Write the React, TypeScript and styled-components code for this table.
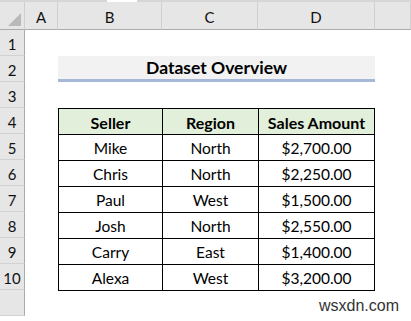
import React from 'react';
import styled, { createGlobalStyle } from 'styled-components';

const GlobalStyle = createGlobalStyle`
  html, body {
    margin: 0;
    padding: 0;
    background: #ffffff;
  }
  body {
    font-family: Lato, "Open Sans", sans-serif;
    width: 411px;
    height: 321px;
    overflow: hidden;
  }
`

const Page = styled.div`
  position: relative;
  width: 411px;
  height: 321px;
  overflow: hidden;
  background: #fff;
`

const TopStrip = styled.div`
  height: 2px;
  background: linear-gradient(to right, #d6d6d6 0 107px, #ffffff 107px 137px, #d6d6d6 137px);
`

const Sheet = styled.div`
  display: grid;
  grid-template-columns: 25px 33px 104px 96px 117px 1fr;
  grid-template-rows: 28px repeat(11, 26px);
`

const Corner = styled.div`
  position: relative;
  background: #e6e6e6;
  border-bottom: 1px solid #ababab;
  border-right: 1px solid #cfcfcf;

  &::after {
    content: '';
    position: absolute;
    right: 3px;
    bottom: 3px;
    width: 0;
    height: 0;
    border-left: 13px solid transparent;
    border-bottom: 13px solid #b9b9b9;
  }
`

const ColHead = styled.div`
  display: flex;
  align-items: center;
  justify-content: center;
  background: #e6e6e6;
  border-bottom: 1px solid #ababab;
  border-right: 1px solid #cfcfcf;
  font-size: 15px;
  color: #111;
  padding-top: 2px;
`

const RowHead = styled.div`
  display: flex;
  align-items: center;
  justify-content: center;
  background: #e6e6e6;
  border-right: 1px solid #ababab;
  border-bottom: 1px solid #d2d2d2;
  font-size: 15px;
  color: #111;
  padding-top: 2px;
`

const Title = styled.div`
  grid-column: 3 / span 3;
  display: flex;
  align-items: center;
  justify-content: center;
  background: #f2f2f2;
  border-bottom: 3px solid #a6b7da;
  font-weight: 700;
  font-size: 17.5px;
  color: #000;
`

const Table = styled.div`
  grid-column: 3 / span 3;
  grid-row: 5 / span 7;
  display: grid;
  grid-template-columns: 103px 95px 1fr;
  grid-auto-rows: 1fr;
  gap: 1px;
  padding: 1px;
  background: #000;
  margin-bottom: -1px;
`

const Cell = styled.div<{ $head?: boolean }>`
  display: flex;
  align-items: center;
  justify-content: center;
  background: ${p => (p.$head ? '#e2efda' : '#ffffff')};
  font-weight: ${p => (p.$head ? 700 : 400)};
  font-size: ${p => (p.$head ? '16px' : '15.5px')};
  color: #000;
  padding-top: 1px;
`

const Watermark = styled.div`
  position: absolute;
  right: 12px;
  bottom: 6px;
  font-family: "Liberation Sans", Arial, sans-serif;
  font-size: 16px;
  color: #333;
`

const rows = [
  ['Mike', 'North', '$2,700.00'],
  ['Chris', 'North', '$2,250.00'],
  ['Paul', 'West', '$1,500.00'],
  ['Josh', 'North', '$2,550.00'],
  ['Carry', 'East', '$1,400.00'],
  ['Alexa', 'West', '$3,200.00'],
]

export default function App() {
  return (
    <Page>
      <GlobalStyle />
      <TopStrip />
      <Sheet>
        <Corner />
        {['A', 'B', 'C', 'D', ''].map((c, i) => (
          <ColHead key={i}>{c}</ColHead>
        ))}
        {Array.from({ length: 11 }).map((_, i) => (
          <RowHead key={i} style={{ gridColumn: 1, gridRow: i + 2 }}>
            {i < 10 ? i + 1 : ''}
          </RowHead>
        ))}
        <Title style={{ gridRow: 3 }}>Dataset Overview</Title>
        <Table>
          <Cell $head>Seller</Cell>
          <Cell $head>Region</Cell>
          <Cell $head>Sales Amount</Cell>
          {rows.map(r => r.map((v, j) => <Cell key={r[0] + j}>{v}</Cell>))}
        </Table>
      </Sheet>
      <Watermark>wsxdn.com</Watermark>
    </Page>
  )
}
